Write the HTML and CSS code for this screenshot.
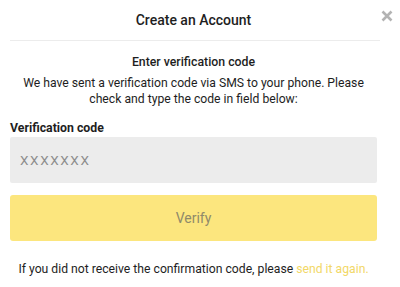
FILE: index.html
```html
<!DOCTYPE html>
<html>
<head>
<meta charset="utf-8">
<link rel="stylesheet" href="styles.css">
</head>
<body>
<div class="modal">
  <div class="header">
    <h1 class="title">Create an Account</h1>
    <svg class="close" width="12" height="12" viewBox="0 0 12 12"><path d="M1.5 1.5 L10.5 10.5 M10.5 1.5 L1.5 10.5" stroke="#b3b3b3" stroke-width="2.6" stroke-linecap="butt"/></svg>
  </div>
  <div class="content">
    <h2 class="subtitle">Enter verification code</h2>
    <p class="desc">We have sent a verification code via SMS to your phone. Please check and type the code in field below:</p>
    <label class="label">Verification code</label>
    <div class="input">XXXXXXX</div>
    <button class="btn">Verify</button>
    <p class="resend">If you did not receive the confirmation code, please <a class="link">send it again.</a></p>
  </div>
</div>
</body>
</html>
```
FILE: styles.css
```css
html, body {
  margin: 0;
  padding: 0;
  background: #fff;
}
body {
  font-family: Roboto, "Liberation Sans", sans-serif;
  color: #1e1e1e;
}
.modal {
  width: 370px;
  margin-left: 10px;
}
.header {
  position: relative;
  height: 40px;
  border-bottom: 1px solid #ececec;
  display: flex;
  align-items: center;
  justify-content: center;
}
.title {
  margin: 0;
  font-size: 14px;
  font-weight: 500;
  padding-right: 3px;
}
.close {
  position: absolute;
  right: -13px;
  top: 10px;
}
.content {
  width: 367px;
  display: flex;
  flex-direction: column;
}
.subtitle {
  margin: 13px 0 0;
  font-size: 12.3px;
  font-weight: 500;
  text-align: center;
  line-height: 16px;
}
.desc {
  margin: 6px 0 0;
  font-size: 12.2px;
  line-height: 15.5px;
  text-align: center;
  padding: 0 8px;
}
.label {
  margin-top: 13px;
  font-size: 12.3px;
  font-weight: 700;
  line-height: 16px;
}
.input {
  margin-top: 1px;
  height: 46px;
  background: #ececec;
  border-radius: 2px;
  display: flex;
  align-items: center;
  padding-left: 10px;
  font-size: 13.5px;
  color: #8c8c8c;
  letter-spacing: 1.6px;
}
.btn {
  margin-top: 12px;
  height: 46px;
  border: 0;
  border-radius: 3px;
  background: #fce67e;
  color: #8f8a6a;
  font-family: inherit;
  font-size: 14px;
}
.resend {
  margin: 20px 0 0;
  font-size: 12.2px;
  line-height: 16px;
  text-align: center;
}
.link {
  color: #f2d867;
}
```
